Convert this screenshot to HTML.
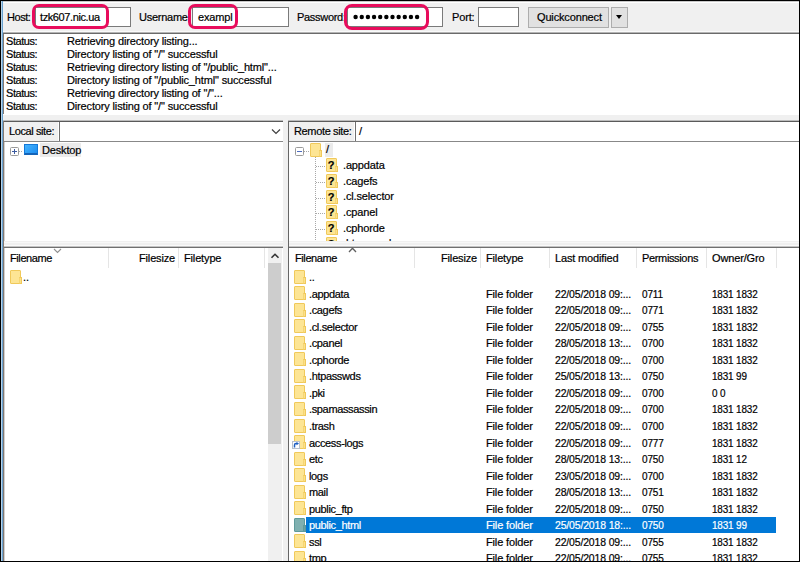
<!DOCTYPE html>
<html><head><meta charset="utf-8">
<style>
*{margin:0;padding:0;box-sizing:border-box}
html,body{width:800px;height:562px;overflow:hidden;background:#fff}
body{position:relative;font-family:"Liberation Sans",sans-serif;font-size:11px;letter-spacing:-0.15px;color:#000;-webkit-text-stroke-width:0.2px}
.a{position:absolute}
.t{position:absolute;white-space:nowrap;line-height:13px}
.inp{position:absolute;background:#fff;border:1px solid #7a7a7a}
.hl{position:absolute;border:3px solid #e80c5c;border-radius:7px}
.btn{position:absolute;background:#e1e1e1;border:1px solid #adadad}
.row{position:absolute;left:289px;width:510px;height:16.55px}
.row span{position:absolute;top:2.5px;white-space:nowrap;line-height:13px}
.row .c0{left:20px;letter-spacing:-0.35px}.row .c2{left:197px}.row .c3{left:266px;transform:scaleX(0.95);transform-origin:0 0}.row .c4{left:353px;transform:scaleX(0.91);transform-origin:0 0}.row .c5{left:423px;transform:scaleX(0.9);transform-origin:0 0}
.selbg{position:absolute;left:17px;top:0;width:470px;height:16px;background:#0078d7}
.row.sel span{color:#fff}
.row .fold{left:5px;top:1px}
.fold{position:absolute;width:11px;height:14px;background:#fde594;border:1px solid #f0c95a;border-radius:1px}
.fold i{position:absolute;right:-2px;bottom:-1px;width:3px;height:7px;background:#fbe08a;border:1px solid #f0c95a;border-left-color:#f6d673}
.fsel{background:#7fb0b0;border-color:#5f9a9a}
.fsel i{background:#6aa0a0;border-color:#5f9a9a}
.lnk{position:absolute;left:3px;top:8.5px;width:7px;height:7px;background:#fff;border:1px solid #b8c0cc}
.lnk b{position:absolute;left:1.5px;top:1px;width:3px;height:4px;border-top:2px solid #1f5fc0;border-left:2px solid #1f5fc0}
.hdr{position:absolute;white-space:nowrap;line-height:13px;top:252px}
.sep{position:absolute;width:1px;top:248px;height:20px;background:#e5e5e5}
.qi{position:absolute;width:11px;height:14px;background:#fde594;border:1px solid #f0c95a;border-radius:1px;font-weight:bold;font-size:11px;line-height:12px;text-align:center;letter-spacing:0;padding-right:1px}
.qi i{position:absolute;right:-2px;bottom:-1px;width:3px;height:6px;background:#fbe08a;border:1px solid #f0c95a;border-left-color:#f6d673}
.doth{position:absolute;height:1px;background:repeating-linear-gradient(90deg,#a8a8a8 0 1px,transparent 1px 2px)}
.dotv{position:absolute;width:1px;background:repeating-linear-gradient(180deg,#a8a8a8 0 1px,transparent 1px 2px)}
</style></head><body>
<!-- toolbar -->
<div class="a" style="left:3px;top:1px;width:796px;height:31px;background:#f0f0f0"></div>
<div class="a" style="left:3px;top:1px;width:796px;height:1px;background:#c8c8c8"></div>
<div class="a" style="left:3px;top:2px;width:796px;height:1px;background:#fff"></div>
<div class="a" style="left:3px;top:31px;width:796px;height:1px;background:#fafafa"></div>
<div class="a" style="left:3px;top:32px;width:796px;height:1px;background:#b4b4b4"></div>
<div class="a" style="left:3px;top:33px;width:796px;height:1px;background:#6a6a6a"></div>

<div class="t" style="left:7px;top:11px;letter-spacing:-0.45px">Host:</div>
<div class="inp" style="left:35px;top:7px;width:96px;height:20px"></div>
<div class="t" style="left:40px;top:11.0px;letter-spacing:-0.4px">tzk607.nic.ua</div>
<div class="hl" style="left:31.5px;top:3.5px;width:77.5px;height:25px"></div>

<div class="t" style="left:139px;top:11px;letter-spacing:-0.25px">Username:</div>
<div class="inp" style="left:192px;top:7px;width:97px;height:20px"></div>
<div class="t" style="left:198px;top:11.0px">exampl</div>
<div class="hl" style="left:188px;top:3.5px;width:50px;height:25.3px"></div>

<div class="t" style="left:297px;top:11.0px;letter-spacing:-0.3px">Password:</div>
<div class="inp" style="left:347px;top:7px;width:96px;height:20px"></div>
<svg class="a" style="left:0;top:0" width="450" height="30"><circle cx="355.60" cy="17" r="2.2"/><circle cx="361.75" cy="17" r="2.2"/><circle cx="367.90" cy="17" r="2.2"/><circle cx="374.05" cy="17" r="2.2"/><circle cx="380.20" cy="17" r="2.2"/><circle cx="386.35" cy="17" r="2.2"/><circle cx="392.50" cy="17" r="2.2"/><circle cx="398.65" cy="17" r="2.2"/><circle cx="404.80" cy="17" r="2.2"/><circle cx="410.95" cy="17" r="2.2"/><circle cx="417.10" cy="17" r="2.2"/></svg>
<div class="hl" style="left:344px;top:4px;width:85px;height:26px;border-radius:8px"></div>

<div class="t" style="left:452px;top:11.0px">Port:</div>
<div class="inp" style="left:478px;top:7px;width:41px;height:20px"></div>

<div class="btn" style="left:528px;top:7px;width:81px;height:21px"></div>
<div class="t" style="left:537px;top:11.0px">Quickconnect</div>
<div class="btn" style="left:611px;top:7px;width:17px;height:21px"></div>
<div class="a" style="left:616px;top:15px;width:0;height:0;border-left:3.5px solid transparent;border-right:3.5px solid transparent;border-top:4px solid #000"></div>

<!-- status log -->
<div class="a" style="left:3px;top:34px;width:1px;height:80px;background:#857a72"></div>
<div class="t" style="left:6px;top:35.0px;letter-spacing:-0.45px">Status:</div><div class="t" style="left:67px;top:35.0px">Retrieving directory listing...</div>
<div class="t" style="left:6px;top:48.0px;letter-spacing:-0.45px">Status:</div><div class="t" style="left:67px;top:48.0px">Directory listing of "/" successful</div>
<div class="t" style="left:6px;top:61.0px;letter-spacing:-0.45px">Status:</div><div class="t" style="left:67px;top:61.0px">Retrieving directory listing of "/public_html"...</div>
<div class="t" style="left:6px;top:74.0px;letter-spacing:-0.45px">Status:</div><div class="t" style="left:67px;top:74.0px">Directory listing of "/public_html" successful</div>
<div class="t" style="left:6px;top:87.0px;letter-spacing:-0.45px">Status:</div><div class="t" style="left:67px;top:87.0px">Retrieving directory listing of "/"...</div>
<div class="t" style="left:6px;top:100.0px;letter-spacing:-0.45px">Status:</div><div class="t" style="left:67px;top:100.0px">Directory listing of "/" successful</div>

<!-- splitter -->
<div class="a" style="left:3px;top:115px;width:796px;height:6px;background:#f0f0f0"></div>

<!-- local site bar -->
<div class="a" style="left:3px;top:120px;width:280px;height:1px;background:#bcbcbc"></div>
<div class="a" style="left:3px;top:121px;width:280px;height:1px;background:#5a5a5a"></div>
<div class="a" style="left:4px;top:122px;width:55px;height:19px;background:#f0f0f0"></div>
<div class="t" style="left:9px;top:125px;letter-spacing:-0.4px">Local site:</div>
<div class="a" style="left:58px;top:122px;width:225px;height:19px;background:#fff;border-left:1px solid #fff"><div class="a" style="left:0;top:0;width:1px;height:19px;background:#707070"></div></div>
<svg class="a" style="left:271px;top:128px" width="10" height="7"><path d="M1 1.5 L5 5.5 L9 1.5" fill="none" stroke="#404040" stroke-width="1.2"/></svg>
<div class="a" style="left:4px;top:141px;width:279px;height:1px;background:#888"></div>

<!-- remote site bar -->
<div class="a" style="left:288px;top:120px;width:511px;height:1px;background:#bcbcbc"></div>
<div class="a" style="left:288px;top:121px;width:511px;height:1px;background:#5a5a5a"></div>
<div class="a" style="left:289px;top:122px;width:65px;height:19px;background:#f0f0f0"></div>
<div class="t" style="left:294px;top:125px;letter-spacing:-0.35px">Remote site:</div>
<div class="a" style="left:354px;top:122px;width:445px;height:19px;background:#fff;border-left:1px solid #fff"><div class="a" style="left:0;top:0;width:1px;height:19px;background:#707070"></div></div>
<div class="t" style="left:359px;top:125.0px">/</div>
<div class="a" style="left:289px;top:141px;width:510px;height:1px;background:#888"></div>

<!-- gap between panels -->
<div class="a" style="left:283px;top:121px;width:5px;height:441px;background:#f0f0f0"></div>
<div class="a" style="left:3px;top:121px;width:1px;height:441px;background:#857a72"></div>
<div class="a" style="left:4px;top:142px;width:1px;height:99px;background:#d0d0d0"></div>
<div class="a" style="left:4px;top:248px;width:1px;height:313px;background:#d0d0d0"></div>
<div class="a" style="left:288px;top:121px;width:1px;height:441px;background:#666"></div>

<!-- local tree -->
<div class="a" style="left:10px;top:147px;width:8.5px;height:8.5px;border:1px solid #9a9a9a;border-radius:1.5px;background:#fff"></div>
<div class="a" style="left:12px;top:151px;width:5px;height:1px;background:#3c5aa0"></div>
<div class="a" style="left:14px;top:149px;width:1px;height:5px;background:#3c5aa0"></div>
<div class="doth" style="left:19px;top:151px;width:4px"></div>
<div class="a" style="left:24px;top:144px;width:14px;height:11px;background:linear-gradient(135deg,#45b4ff,#1e8ef0);border:1px solid #1478d8;border-bottom:2px solid #1564b8"></div>
<div class="a" style="left:40px;top:143px;width:41px;height:14px;background:#ebebeb"></div>
<div class="t" style="left:42px;top:144.0px">Desktop</div>

<!-- remote tree -->
<div class="a" style="left:0;top:0;width:800px;height:562px;clip-path:inset(142px 1px 321px 289px)">
<div class="a" style="left:295px;top:147px;width:8.5px;height:8.5px;border:1px solid #9a9a9a;border-radius:1.5px;background:#fff"></div>
<div class="a" style="left:297px;top:150.5px;width:4.5px;height:1.5px;background:#4d6cc0"></div>
<div class="doth" style="left:304px;top:151px;width:5px"></div>
<div class="fold" style="left:310px;top:143px"><i></i></div>
<div class="a" style="left:325px;top:143px;width:8px;height:14px;background:#ebebeb"></div>
<div class="t" style="left:326px;top:143.0px">/</div>
<div class="dotv" style="left:315px;top:157px;height:84px"></div>
<div class="doth" style="left:316px;top:166px;width:9px"></div><div class="qi" style="left:326px;top:158.3px"><i></i>?</div><div class="t" style="left:343px;top:158.9px">.appdata</div>
<div class="doth" style="left:316px;top:182px;width:9px"></div><div class="qi" style="left:326px;top:174.0px"><i></i>?</div><div class="t" style="left:343px;top:174.6px">.cagefs</div>
<div class="doth" style="left:316px;top:198px;width:9px"></div><div class="qi" style="left:326px;top:189.7px"><i></i>?</div><div class="t" style="left:343px;top:190.3px">.cl.selector</div>
<div class="doth" style="left:316px;top:213px;width:9px"></div><div class="qi" style="left:326px;top:205.4px"><i></i>?</div><div class="t" style="left:343px;top:206.0px">.cpanel</div>
<div class="doth" style="left:316px;top:229px;width:9px"></div><div class="qi" style="left:326px;top:221.1px"><i></i>?</div><div class="t" style="left:343px;top:221.7px">.cphorde</div>
<div class="doth" style="left:316px;top:245px;width:9px"></div><div class="qi" style="left:326px;top:236.8px"><i></i>?</div><div class="t" style="left:343px;top:237.4px">.htpasswds</div>

</div>
<!-- lower splitter -->
<div class="a" style="left:4px;top:241px;width:279px;height:6px;background:#f0f0f0"></div>
<div class="a" style="left:289px;top:241px;width:510px;height:6px;background:#f0f0f0"></div>
<div class="a" style="left:4px;top:242px;width:279px;height:1px;background:#f8f8f8"></div>
<div class="a" style="left:289px;top:242px;width:510px;height:1px;background:#f8f8f8"></div>
<div class="a" style="left:4px;top:245px;width:279px;height:1px;background:#fafafa"></div>
<div class="a" style="left:289px;top:245px;width:510px;height:1px;background:#fafafa"></div>
<div class="a" style="left:4px;top:246px;width:279px;height:1px;background:#c4c4c4"></div>
<div class="a" style="left:289px;top:246px;width:510px;height:1px;background:#c4c4c4"></div>
<div class="a" style="left:4px;top:247px;width:279px;height:1px;background:#707070"></div>
<div class="a" style="left:289px;top:247px;width:510px;height:1px;background:#707070"></div>

<!-- local list -->
<div class="hdr" style="left:10px;letter-spacing:-0.4px">Filename</div>
<svg class="a" style="left:53px;top:248px" width="9" height="6"><path d="M1 1 L4.5 4.5 L8 1" fill="none" stroke="#909090" stroke-width="1.1"/></svg>
<div class="sep" style="left:108px"></div>
<div class="hdr" style="left:139px">Filesize</div>
<div class="sep" style="left:178px"></div>
<div class="hdr" style="left:184px">Filetype</div>
<div class="sep" style="left:264px"></div>
<div class="a" style="left:268px;top:248px;width:14px;height:313px;background:#f0f0f0"></div>
<svg class="a" style="left:270px;top:252px" width="10" height="8"><path d="M1.5 5.8 L5 2.3 L8.5 5.8" fill="none" stroke="#333" stroke-width="1.6"/></svg>
<div class="a" style="left:268px;top:263px;width:13px;height:181px;background:#cdcdcd"></div>
<div class="fold" style="left:10px;top:270px"><i></i></div>
<div class="t" style="left:23px;top:271px">..</div>

<!-- remote list -->
<div class="hdr" style="left:295px;letter-spacing:-0.4px">Filename</div>
<svg class="a" style="left:348px;top:247px" width="9" height="6"><path d="M1 5 L4.5 1.2 L8 5" fill="none" stroke="#606060" stroke-width="1.3"/></svg>
<div class="sep" style="left:414px"></div>
<div class="hdr" style="left:441px">Filesize</div>
<div class="sep" style="left:480px"></div>
<div class="hdr" style="left:486px">Filetype</div>
<div class="sep" style="left:549px"></div>
<div class="hdr" style="left:555px">Last modified</div>
<div class="sep" style="left:636px"></div>
<div class="hdr" style="left:642px;letter-spacing:-0.35px">Permissions</div>
<div class="sep" style="left:706px"></div>
<div class="hdr" style="left:712px">Owner/Gro</div>
<div class="sep" style="left:776px"></div>
<div class="row" style="top:268.55px"><div class="fold"><i></i></div><span class="c0">..</span></div>
<div class="row" style="top:285.10px"><div class="fold"><i></i></div><span class="c0">.appdata</span><span class="c2">File folder</span><span class="c3">22/05/2018 09:...</span><span class="c4">0711</span><span class="c5">1831 1832</span></div>
<div class="row" style="top:301.65px"><div class="fold"><i></i></div><span class="c0">.cagefs</span><span class="c2">File folder</span><span class="c3">22/05/2018 09:...</span><span class="c4">0771</span><span class="c5">1831 1832</span></div>
<div class="row" style="top:318.20px"><div class="fold"><i></i></div><span class="c0">.cl.selector</span><span class="c2">File folder</span><span class="c3">22/05/2018 09:...</span><span class="c4">0755</span><span class="c5">1831 1832</span></div>
<div class="row" style="top:334.75px"><div class="fold"><i></i></div><span class="c0">.cpanel</span><span class="c2">File folder</span><span class="c3">28/05/2018 13:...</span><span class="c4">0700</span><span class="c5">1831 1832</span></div>
<div class="row" style="top:351.30px"><div class="fold"><i></i></div><span class="c0">.cphorde</span><span class="c2">File folder</span><span class="c3">22/05/2018 09:...</span><span class="c4">0700</span><span class="c5">1831 1832</span></div>
<div class="row" style="top:367.85px"><div class="fold"><i></i></div><span class="c0">.htpasswds</span><span class="c2">File folder</span><span class="c3">25/05/2018 13:...</span><span class="c4">0750</span><span class="c5">1831 99</span></div>
<div class="row" style="top:384.40px"><div class="fold"><i></i></div><span class="c0">.pki</span><span class="c2">File folder</span><span class="c3">22/05/2018 09:...</span><span class="c4">0700</span><span class="c5">0 0</span></div>
<div class="row" style="top:400.95px"><div class="fold"><i></i></div><span class="c0">.spamassassin</span><span class="c2">File folder</span><span class="c3">22/05/2018 09:...</span><span class="c4">0700</span><span class="c5">1831 1832</span></div>
<div class="row" style="top:417.50px"><div class="fold"><i></i></div><span class="c0">.trash</span><span class="c2">File folder</span><span class="c3">22/05/2018 09:...</span><span class="c4">0700</span><span class="c5">1831 1832</span></div>
<div class="row" style="top:434.05px"><div class="fold"><i></i></div><svg class="a" style="left:3px;top:7px" width="8" height="8"><rect x="0.5" y="0.5" width="7" height="7" fill="#fff" stroke="#b8c0cc"/><path d="M2.5 6.5 V4 Q2.5 2.5 4 2.5 H5.5" fill="none" stroke="#1f5fc0" stroke-width="1.5"/><path d="M4.5 1 L7 2.6 L4.5 4.2 Z" fill="#1f5fc0"/></svg><span class="c0">access-logs</span><span class="c2">File folder</span><span class="c3">22/05/2018 09:...</span><span class="c4">0777</span><span class="c5">1831 1832</span></div>
<div class="row" style="top:450.60px"><div class="fold"><i></i></div><span class="c0">etc</span><span class="c2">File folder</span><span class="c3">28/05/2018 13:...</span><span class="c4">0750</span><span class="c5">1831 12</span></div>
<div class="row" style="top:467.15px"><div class="fold"><i></i></div><span class="c0">logs</span><span class="c2">File folder</span><span class="c3">23/05/2018 09:...</span><span class="c4">0700</span><span class="c5">1831 1832</span></div>
<div class="row" style="top:483.70px"><div class="fold"><i></i></div><span class="c0">mail</span><span class="c2">File folder</span><span class="c3">28/05/2018 13:...</span><span class="c4">0751</span><span class="c5">1831 1832</span></div>
<div class="row" style="top:500.25px"><div class="fold"><i></i></div><span class="c0">public_ftp</span><span class="c2">File folder</span><span class="c3">22/05/2018 09:...</span><span class="c4">0750</span><span class="c5">1831 1832</span></div>
<div class="row sel" style="top:516.80px"><div class="selbg"></div><div class="fold fsel"><i></i></div><span class="c0">public_html</span><span class="c2">File folder</span><span class="c3">25/05/2018 18:...</span><span class="c4">0750</span><span class="c5">1831 99</span></div>
<div class="row" style="top:533.35px"><div class="fold"><i></i></div><span class="c0">ssl</span><span class="c2">File folder</span><span class="c3">22/05/2018 09:...</span><span class="c4">0755</span><span class="c5">1831 1832</span></div>
<div class="row" style="top:549.90px"><div class="fold"><i></i></div><span class="c0">tmp</span><span class="c2">File folder</span><span class="c3">22/05/2018 09:...</span><span class="c4">0755</span><span class="c5">1831 1832</span></div>

<!-- frame -->
<div class="a" style="left:0;top:0;width:1px;height:562px;background:#000"></div>
<div class="a" style="left:1px;top:1px;width:1px;height:560px;background:#b5d3ea"></div>
<div class="a" style="left:2px;top:1px;width:1px;height:560px;background:#6aa2d0"></div>
<div class="a" style="left:0;top:0;width:800px;height:1px;background:#000"></div>
<div class="a" style="left:799px;top:0;width:1px;height:562px;background:#000"></div>
<div class="a" style="left:0;top:561px;width:800px;height:1px;background:#000"></div>
</body></html>
